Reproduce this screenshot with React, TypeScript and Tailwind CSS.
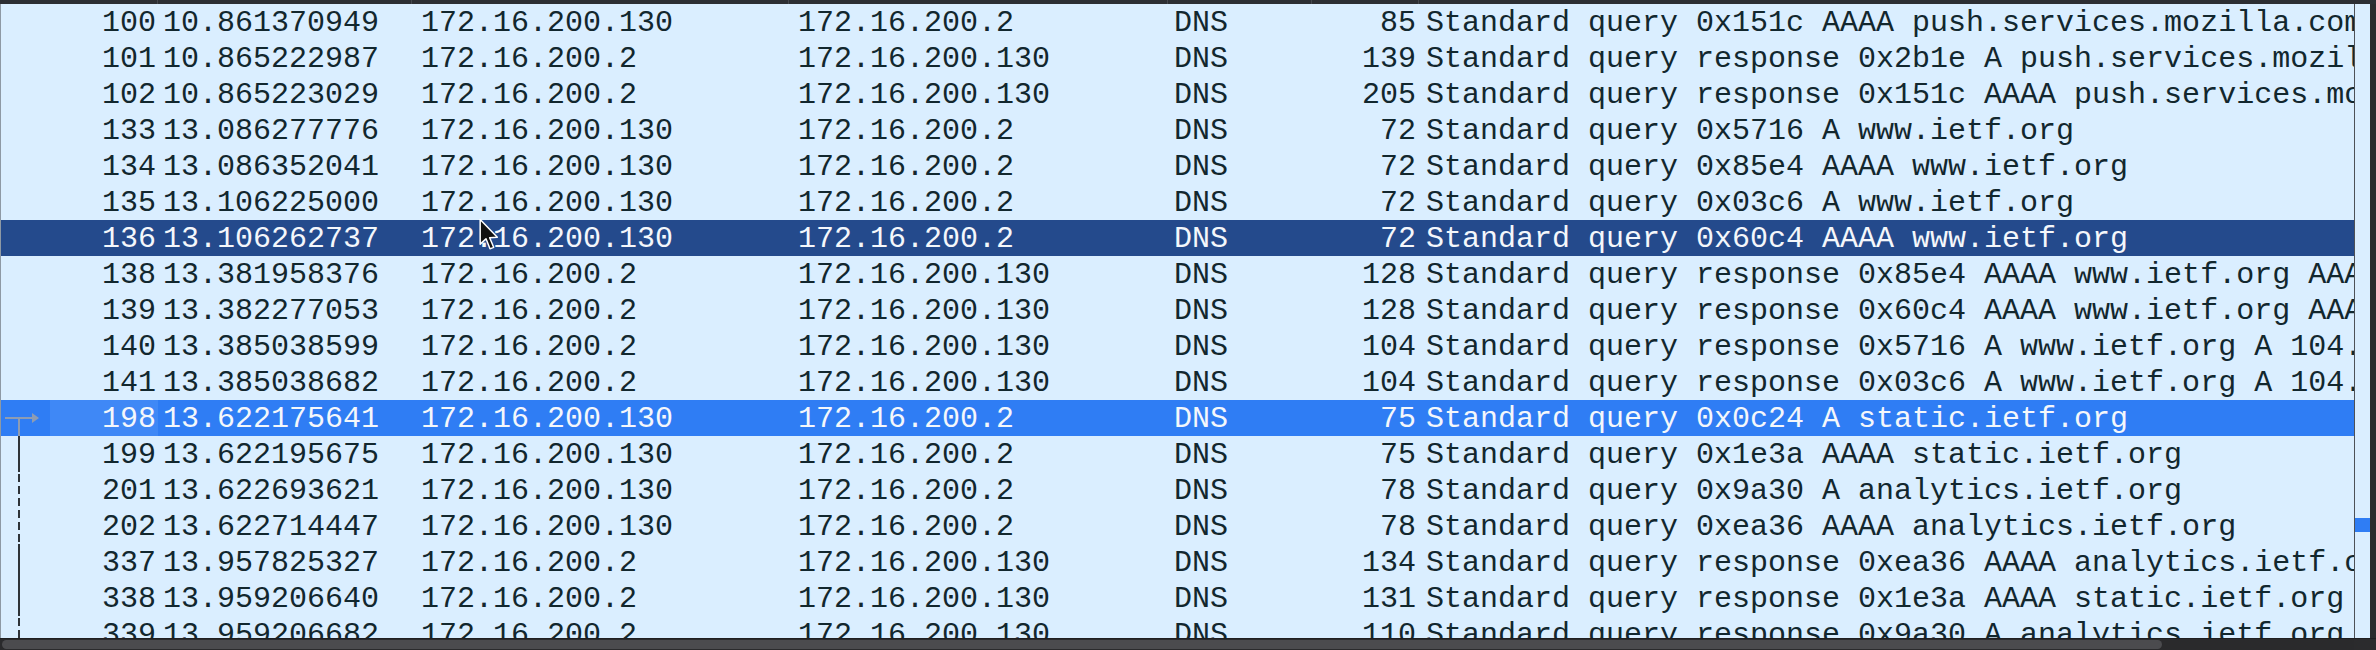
import React from "react";

type Row = {
  no: string;
  time: string;
  src: string;
  dst: string;
  len: string;
  info: string;
  sel?: "dark" | "bright";
  line?: "arrow" | "solid" | "dashed" | "none";
};

const rows: Row[] = [
  { no: "100", time: "10.861370949", src: "172.16.200.130", dst: "172.16.200.2", len: "85", info: "Standard query 0x151c AAAA push.services.mozilla.com" },
  { no: "101", time: "10.865222987", src: "172.16.200.2", dst: "172.16.200.130", len: "139", info: "Standard query response 0x2b1e A push.services.mozilla.com CNAME autopush.prod.mozaws.net" },
  { no: "102", time: "10.865223029", src: "172.16.200.2", dst: "172.16.200.130", len: "205", info: "Standard query response 0x151c AAAA push.services.mozilla.com CNAME autopush.prod.mozaws.net" },
  { no: "133", time: "13.086277776", src: "172.16.200.130", dst: "172.16.200.2", len: "72", info: "Standard query 0x5716 A www.ietf.org" },
  { no: "134", time: "13.086352041", src: "172.16.200.130", dst: "172.16.200.2", len: "72", info: "Standard query 0x85e4 AAAA www.ietf.org" },
  { no: "135", time: "13.106225000", src: "172.16.200.130", dst: "172.16.200.2", len: "72", info: "Standard query 0x03c6 A www.ietf.org" },
  { no: "136", time: "13.106262737", src: "172.16.200.130", dst: "172.16.200.2", len: "72", info: "Standard query 0x60c4 AAAA www.ietf.org", sel: "dark" },
  { no: "138", time: "13.381958376", src: "172.16.200.2", dst: "172.16.200.130", len: "128", info: "Standard query response 0x85e4 AAAA www.ietf.org AAAA 2606:4700::6810:2c63" },
  { no: "139", time: "13.382277053", src: "172.16.200.2", dst: "172.16.200.130", len: "128", info: "Standard query response 0x60c4 AAAA www.ietf.org AAAA 2606:4700::6810:2c63" },
  { no: "140", time: "13.385038599", src: "172.16.200.2", dst: "172.16.200.130", len: "104", info: "Standard query response 0x5716 A www.ietf.org A 104.16.44.99 A 104.16.45.99" },
  { no: "141", time: "13.385038682", src: "172.16.200.2", dst: "172.16.200.130", len: "104", info: "Standard query response 0x03c6 A www.ietf.org A 104.16.45.99 A 104.16.44.99" },
  { no: "198", time: "13.622175641", src: "172.16.200.130", dst: "172.16.200.2", len: "75", info: "Standard query 0x0c24 A static.ietf.org", sel: "bright", line: "arrow" },
  { no: "199", time: "13.622195675", src: "172.16.200.130", dst: "172.16.200.2", len: "75", info: "Standard query 0x1e3a AAAA static.ietf.org", line: "solid" },
  { no: "201", time: "13.622693621", src: "172.16.200.130", dst: "172.16.200.2", len: "78", info: "Standard query 0x9a30 A analytics.ietf.org", line: "dashed" },
  { no: "202", time: "13.622714447", src: "172.16.200.130", dst: "172.16.200.2", len: "78", info: "Standard query 0xea36 AAAA analytics.ietf.org", line: "dashed" },
  { no: "337", time: "13.957825327", src: "172.16.200.2", dst: "172.16.200.130", len: "134", info: "Standard query response 0xea36 AAAA analytics.ietf.org CNAME analytics.ietf.org.cdn", line: "solid" },
  { no: "338", time: "13.959206640", src: "172.16.200.2", dst: "172.16.200.130", len: "131", info: "Standard query response 0x1e3a AAAA static.ietf.org CNAME static.ietf.org.cdn", line: "solid" },
  { no: "339", time: "13.959206682", src: "172.16.200.2", dst: "172.16.200.130", len: "110", info: "Standard query response 0x9a30 A analytics.ietf.org A 104.16.45.99", line: "dashed" },
];

function Indicator({ line, sel }: { line?: Row["line"]; sel?: Row["sel"] }) {
  if (!line || line === "none") return null;
  const col = sel ? "#8d9cb3" : "#2e3338";
  return (
    <svg width="49" height="36" viewBox="0 0 49 36" className="block">
      {line === "arrow" && (
        <g stroke={col} strokeWidth="2" fill="none">
          <line x1="4" y1="18" x2="34" y2="18" />
          <line x1="18" y1="18" x2="18" y2="36" />
          <path d="M31 13 L38 18 L31 23 Z" fill={col} stroke="none" />
        </g>
      )}
      {line === "solid" && <line x1="18" y1="0" x2="18" y2="36" stroke={col} strokeWidth="2" />}
      {line === "dashed" && (
        <line x1="18" y1="2" x2="18" y2="36" stroke={col} strokeWidth="2" strokeDasharray="8 4" />
      )}
    </svg>
  );
}

function PacketRow({ r }: { r: Row }) {
  const bg =
    r.sel === "dark" ? "bg-[#244a8c]" : r.sel === "bright" ? "bg-[#2f7df4]" : "bg-[#daeeff]";
  const fg = r.sel ? "text-[#f4f7fb]" : "text-[#12272e]";
  const cell = "h-[36px] pt-[2px] leading-[34px] whitespace-nowrap overflow-hidden box-border shrink-0";
  return (
    <div className={`flex h-[36px] shrink-0 ${bg} ${fg}`}>
      <div className="w-[49px] h-[36px] shrink-0">
        <Indicator line={r.line} sel={r.sel} />
      </div>
      <div
        className={`${cell} w-[108px] text-right pr-[2px] ${r.sel === "bright" ? "bg-[#3f88f6]" : ""}`}
      >
        {r.no}
      </div>
      <div className={`${cell} w-[254px] pl-[5px]`}>{r.time}</div>
      <div className={`${cell} w-[377px] pl-[9px]`}>{r.src}</div>
      <div className={`${cell} w-[379px] pl-[9px]`}>{r.dst}</div>
      <div className={`${cell} w-[144px] pl-[6px]`}>DNS</div>
      <div className={`${cell} w-[107px] text-right pr-[3px]`}>{r.len}</div>
      <div className={`${cell} flex-1 min-w-0 pl-[7px]`}>{r.info}</div>
    </div>
  );
}

export default function App() {
  return (
    <div className="relative w-[2376px] h-[650px] overflow-hidden bg-[#2b2d31] flex flex-col font-['Liberation_Mono',monospace] text-[30px]">
      {/* header remnant */}
      <div className="flex h-[4px] shrink-0 bg-[#2c2e33]">
        <div className="w-[158px] border-r border-[#44474d]" />
        <div className="w-[254px] border-r border-[#44474d]" />
        <div className="w-[377px] border-r border-[#44474d]" />
        <div className="w-[379px] border-r border-[#44474d]" />
        <div className="w-[144px] border-r border-[#44474d]" />
        <div className="w-[107px] border-r border-[#44474d]" />
        <div className="flex-1" />
      </div>
      <div className="flex flex-1 min-h-0">
        <div className="w-[2354px] shrink-0 overflow-hidden flex flex-col bg-[#daeeff] border-l border-[#8e99a4]">
          {rows.map((r) => (
            <PacketRow key={r.no} r={r} />
          ))}
        </div>
        <div className="w-[1px] shrink-0 bg-[#4d5157]" />
        <div className="w-[15px] shrink-0 bg-[#daeeff] flex flex-col">
          <div className="h-[514px]" />
          <div className="h-[14px] bg-[#2f7df4]" />
        </div>
        <div className="flex-1 bg-[#2b2b2d]" />
      </div>
      <div className="h-[12px] shrink-0 flex bg-[#2a2a2c] border-t border-[#1f1f21]">
        <div className="w-[2354px] shrink-0 flex items-center px-[2px]">
          <div className="w-[2160px] h-[9px] rounded-[5px] bg-[#4b4b4e]" />
        </div>
        <div className="flex-1 bg-[#2b2b2d]" />
      </div>
      {/* mouse cursor */}
      <svg
        className="absolute left-[479px] top-[218px]"
        width="20"
        height="34"
        viewBox="0 0 12 20"
      >
        <path
          d="M0.7 0.7 L0.7 15.5 L4.2 12.3 L6.6 18.3 L8.8 17.4 L6.4 11.6 L11 11.4 Z"
          fill="#111"
          stroke="#fff"
          strokeWidth="0.9"
          strokeLinejoin="round"
        />
      </svg>
    </div>
  );
}
